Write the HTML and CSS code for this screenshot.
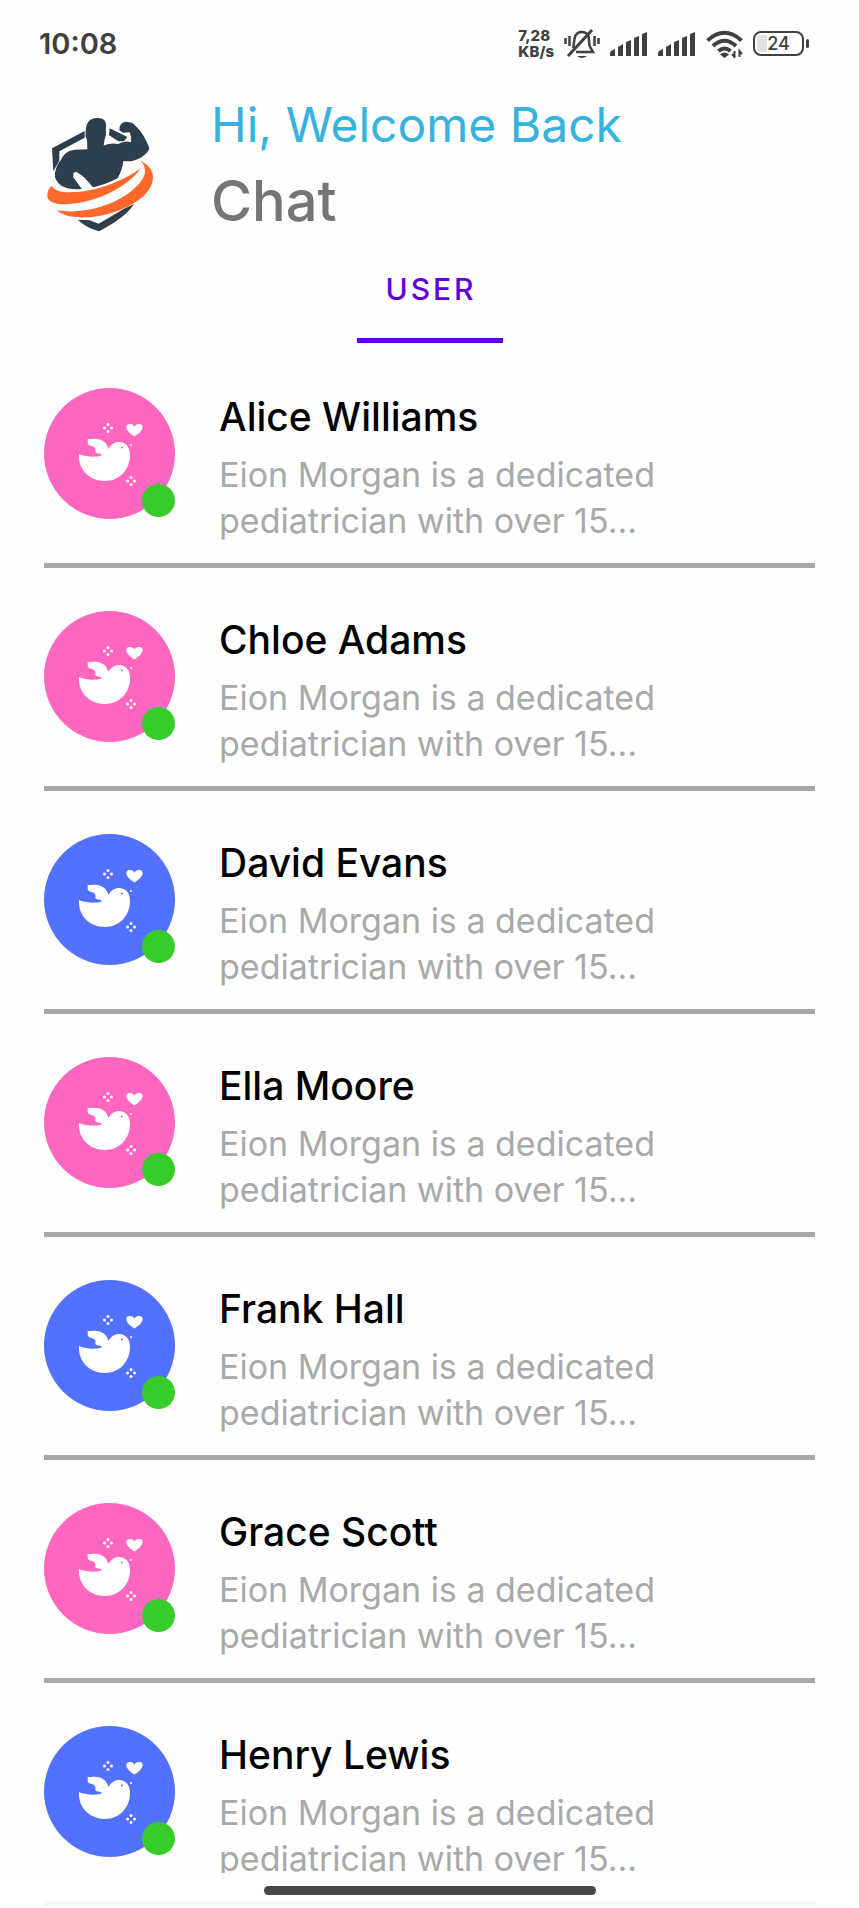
FILE: index.html
```html
<!DOCTYPE html>
<html lang="en">
<head>
<meta charset="utf-8">
<meta name="viewport" content="width=device-width, initial-scale=1">
<title>Chat</title>
<link rel="stylesheet" href="styles.css">
</head>
<body>
<svg class="defs" aria-hidden="true">
  <symbol id="dove" viewBox="0 0 131 131">
    <path fill="#fff" d="M35 66C42 69 52 69.500 57.500 67.500C58.500 65.500 55 66 52.500 65C50 64 52.500 62 51 60C49.500 57.500 45.500 58.500 44 56C43 54 44.500 53.500 43.500 52C43.500 50.500 45 51 47 51C57 49.500 62.500 54 64.500 61C67 55.500 72 53.500 76 54C83 55 86 60 86 67C86 82 75 93 61 93C46 93 34 82 35 66Z"/>
    <circle cx="78" cy="59.500" r="1" fill="currentColor"/>
    <circle cx="87" cy="57" r="1" fill="#fff"/>
    <path fill="#fff" d="M90.500 48.500C80 42 81 36 86 36C88.500 36 90.500 37.500 90.500 39C90.500 37.500 92.500 36 95 36C100 36 101 42 90.500 48.500Z"/>
    <g fill="#fff">
      <circle cx="64" cy="36.500" r="1.500"/><circle cx="64" cy="43.500" r="1.500"/><circle cx="60.500" cy="40" r="1.500"/><circle cx="67.500" cy="40" r="1.500"/>
      <circle cx="87" cy="89.500" r="1.500"/><circle cx="87" cy="96.500" r="1.500"/><circle cx="83.500" cy="93" r="1.500"/><circle cx="90.500" cy="93" r="1.500"/>
    </g>
  </symbol>
  <symbol id="signal" viewBox="0 0 38 26">
    <path fill="#404040" d="M0 25V22Q0 20 5 18V25ZM8 25V16L13 13V25ZM16 25V11L21 9V25ZM24 25V7L29 5V25ZM32 25V3L37 1V25Z"/>
  </symbol>
</svg>

<div class="status">
  <time class="clock">10:08</time>
  <div class="indicators">
    <div class="speed"><span>7,28</span><span>KB/s</span></div>
    <svg class="bell" viewBox="0 0 36 32" aria-label="Muted">
      <g fill="none" stroke="#404040" stroke-width="2.500">
        <path d="M9 20C11 16 8 4 18 4C23 4 25 8 25 12C25 18 26 19 29 24H12"/>
        <path d="M4 28L28 2" stroke-width="3"/>
        <path d="M1.500 10V16M5.500 8V18M30.500 8V18M34.500 10V16"/>
      </g>
      <path fill="#404040" d="M13 28H23Q18 32 13 28Z"/>
    </svg>
    <svg class="signal" aria-label="SIM 1"><use href="#signal"/></svg>
    <svg class="signal" aria-label="SIM 2"><use href="#signal"/></svg>
    <svg class="wifi" viewBox="0 0 37 28" aria-label="Wi-Fi">
      <g fill="none" stroke="#404040" stroke-width="4">
        <path d="M1.500 10.500Q18.500-5 35.500 10.500"/>
        <path d="M7 16Q18.500 5.500 30 16"/>
        <path d="M12.500 21Q18.500 16 24.500 21" />
        <path stroke-width="2" d="M28.500 21V27L26 24M33.500 27V21L36 24"/>
      </g>
      <path fill="#404040" d="M14 24.500Q18.500 20.500 23 24.500L18.500 28Z"/>
    </svg>
    <div class="battery"><span class="cell">24</span></div>
  </div>
</div>

<header class="header">
  <svg class="logo" viewBox="0 0 420 420" aria-label="Fitness logo">
    <g fill="#2d3e4d">
      <path d="M66 145L164 93V113L88 154V182L70 214Z"/>
      <path d="M239 85L292 111L282 124H265L237 106Z"/>
      <path d="M143 359L179 361L206 371L282 326L312 312Q290 350 207 394Q170 384 143 359Z"/>
      <path d="M172 148L171 119Q164 108 167 95Q168 55 200 54Q235 52 227 90Q231 101 224 117L221 137Q240 128 264 132Q285 120 303 127Q306 111 299 97L279 98L268 91Q267 69 287 65L306 68L321 82Q342 103 358 144Q357 155 337 170Q308 188 280 183Q278 207 263 235Q220 257 180 264Q178 236 138 215Q127 222 133 235L156 267Q90 274 75 232Q73 203 92 181Q104 152 134 149Z"/>
    </g>
    <path fill="#fff" d="M131 217Q164 229 190 263L158 269L130 232Z"/>
    <g fill="#ff682b">
      <path d="M65 257C77 289 178 278 245 251Q300 230 333 204Q304 247 231 283C142 322 47 323 52 284Q52 269 65 257Z"/>
      <path d="M330 181Q378 207 367 246C354 305 243 352 166 352Q104 354 80 331C155 344 243 319 296 280Q348 239 345 211Q343 192 330 181Z"/>
    </g>
  </svg>
  <div class="titles">
    <p class="greeting">Hi, Welcome Back</p>
    <h1 class="page-title">Chat</h1>
  </div>
</header>

<nav class="tabs"><button class="tab" type="button">USER</button></nav>

<main>
<ul class="chats">
  <li class="chat"><div class="avatar pink"><svg class="dove"><use href="#dove"/></svg><span class="online"></span></div><div class="info"><h2 class="name">Alice Williams</h2><p class="bio">Eion Morgan is a dedicated pediatrician with over 15...</p></div></li>
  <li class="chat"><div class="avatar pink"><svg class="dove"><use href="#dove"/></svg><span class="online"></span></div><div class="info"><h2 class="name">Chloe Adams</h2><p class="bio">Eion Morgan is a dedicated pediatrician with over 15...</p></div></li>
  <li class="chat"><div class="avatar blue"><svg class="dove"><use href="#dove"/></svg><span class="online"></span></div><div class="info"><h2 class="name">David Evans</h2><p class="bio">Eion Morgan is a dedicated pediatrician with over 15...</p></div></li>
  <li class="chat"><div class="avatar pink"><svg class="dove"><use href="#dove"/></svg><span class="online"></span></div><div class="info"><h2 class="name">Ella Moore</h2><p class="bio">Eion Morgan is a dedicated pediatrician with over 15...</p></div></li>
  <li class="chat"><div class="avatar blue"><svg class="dove"><use href="#dove"/></svg><span class="online"></span></div><div class="info"><h2 class="name">Frank Hall</h2><p class="bio">Eion Morgan is a dedicated pediatrician with over 15...</p></div></li>
  <li class="chat"><div class="avatar pink"><svg class="dove"><use href="#dove"/></svg><span class="online"></span></div><div class="info"><h2 class="name">Grace Scott</h2><p class="bio">Eion Morgan is a dedicated pediatrician with over 15...</p></div></li>
  <li class="chat"><div class="avatar blue"><svg class="dove"><use href="#dove"/></svg><span class="online"></span></div><div class="info"><h2 class="name">Henry Lewis</h2><p class="bio">Eion Morgan is a dedicated pediatrician with over 15...</p></div></li>
</ul>
</main>
<div class="home-bar"><span class="handle"></span></div>
</body>
</html>
```
FILE: styles.css
```css
* { box-sizing: border-box; margin: 0; padding: 0; }
body { background: #fefefe; font-family: Inter, "Liberation Sans", sans-serif; color: #000; }
.defs { position: absolute; width: 0; height: 0; }

.status { display: flex; align-items: center; justify-content: space-between; height: 87px; padding: 0 50px 0 39px; color: #404040; }
.clock { font-size: 29px; font-weight: 600; line-height: 32px; }
.indicators { display: flex; align-items: center; gap: 10px; }
.speed { display: flex; flex-direction: column; font-size: 15px; font-weight: 800; line-height: 16px; }
.bell { width: 36px; height: 32px; }
.signal { width: 38px; height: 26px; }
.wifi { width: 37px; height: 28px; }
.battery { display: flex; align-items: center; gap: 2px; }
.battery::after { content: ""; width: 3px; height: 9px; border-radius: 2px; background: #404040; }
.cell { width: 51px; height: 25px; border: 2px solid #404040; border-radius: 8px; background: linear-gradient(90deg, #e2e2e2 10px, transparent 10px) content-box; padding: 2px; font-size: 18px; font-weight: 500; line-height: 17px; text-align: center; }

.header { display: flex; align-items: flex-start; gap: 41px; padding: 0 30px; }
.logo { width: 140px; height: 140px; margin-top: 13px; }
.titles { color: #757575; }
.greeting { font-size: 48px; line-height: 76px; color: #35b2dd; }
.page-title { font-size: 56px; font-weight: 500; line-height: 76px; }

.tabs { display: flex; justify-content: center; margin-top: 3px; }
.tab { height: 100px; width: 146px; padding: 0 0 3px 3px; border: 0; border-bottom: 5px solid #5f00e0; background: none; color: #5f00e0; font-family: inherit; font-size: 30px; font-weight: 500; letter-spacing: 3px; }

.chats { list-style: none; padding: 2px 44px 0; }
.chat { display: flex; align-items: flex-start; gap: 44px; padding: 43px 0 19px; border-bottom: 5px solid #a8a8a8; }
.avatar { position: relative; flex: none; width: 131px; height: 131px; border-radius: 50%; }
.pink { background: #ff66c0; color: #ff66c0; }
.blue { background: #5271ff; color: #5271ff; }
.dove { display: block; width: 131px; height: 131px; }
.online { position: absolute; right: 0; bottom: 2px; width: 33px; height: 33px; border-radius: 50%; background: #38cc2b; }
.info { max-width: 480px; padding-top: 5px; }
.name { font-size: 39px; font-weight: 500; line-height: 48px; margin-bottom: 11px; }
.bio { font-size: 34px; line-height: 46px; color: #a9a9a9; }

.home-bar { position: fixed; left: 0; right: 0; bottom: 0; display: flex; justify-content: center; height: 35px; padding-top: 13px; background: rgba(255, 255, 255, 0.9); }
.handle { width: 332px; height: 9px; border-radius: 5px; background: #474747; }
```
